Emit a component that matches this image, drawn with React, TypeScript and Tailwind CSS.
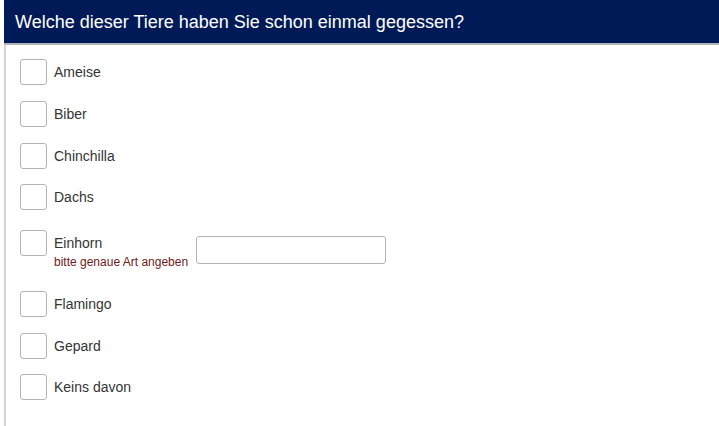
import React from 'react';

const animals = [
  { label: 'Ameise', mt: 'mt-0' },
  { label: 'Biber', mt: 'mt-[16px]' },
  { label: 'Chinchilla', mt: 'mt-[16px]' },
  { label: 'Dachs', mt: 'mt-[15px]' },
];

const rest = [
  { label: 'Flamingo', mt: 'mt-[21px]' },
  { label: 'Gepard', mt: 'mt-[16px]' },
  { label: 'Keins davon', mt: 'mt-[15px]' },
];

const Box = () => (
  <div className="w-[27px] h-[26px] shrink-0 rounded-[3px] border border-[#b4b4b4] bg-white" />
);

const Row = ({ label, mt }: { label: string; mt: string }) => (
  <div className={`flex items-center ${mt}`}>
    <Box />
    <span className="ml-[7px] text-[14px] leading-[18px] text-[#333333]">{label}</span>
  </div>
);

export default function App() {
  return (
    <div className="w-[719px] h-[426px] bg-white pl-[4px] overflow-hidden" style={{ fontFamily: '"Liberation Sans", Arial, sans-serif' }}>
      <div className="h-[45px] bg-[#001a57] flex items-center pl-[11px] border-b-2 border-[#b0b3b8]">
        <h1 className="text-[18px] text-white leading-none">Welche dieser Tiere haben Sie schon einmal gegessen?</h1>
      </div>
      <div className="border-l-2 border-[#d4d4d4] h-[381px] pl-[14px] pt-[14px]">
        {animals.map((a) => (
          <Row key={a.label} {...a} />
        ))}
        <div className="flex items-start mt-[20px]">
          <Box />
          <div className="ml-[7px] pt-[4px] flex flex-col">
            <span className="text-[14px] leading-[18px] text-[#333333]">Einhorn</span>
            <span className="mt-[2px] text-[12px] leading-[16px] text-[#6e1a1a]">bitte genaue Art angeben</span>
          </div>
          <input type="text" className="ml-[8px] mt-[6px] w-[190px] h-[28px] rounded-[3px] border border-[#b4b4b4] bg-white outline-none" />
        </div>
        {rest.map((a) => (
          <Row key={a.label} {...a} />
        ))}
      </div>
    </div>
  );
}
